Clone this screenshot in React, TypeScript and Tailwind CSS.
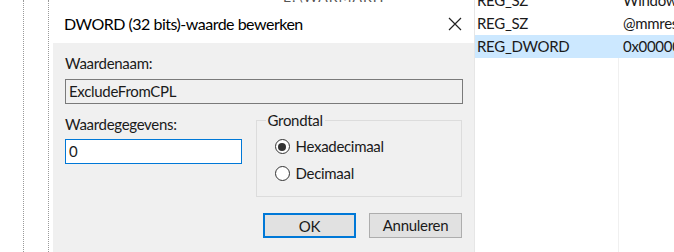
import React from 'react';

const font = { fontFamily: 'Lato, "Noto Sans", sans-serif' };

function Radio({ checked, label }: { checked?: boolean; label: string }) {
    return (
        <div className="flex items-center gap-[6px] h-[27px]">
            <div className="w-[15px] h-[15px] rounded-full border border-[#333333] bg-white flex items-center justify-center">
                {checked && <div className="w-[8px] h-[8px] rounded-full bg-[#333333]" />}
            </div>
            <span className="text-[15px] tracking-[-0.3px] text-[#1a1a1a]">{label}</span>
        </div>
    );
}

export default function App() {
    return (
        <div className="flex w-[674px] h-[252px] overflow-hidden bg-white" style={font}>
            {/* tree pane behind the dialog */}
            <div className="w-[53px] flex flex-shrink-0">
                <div className="w-[23px]" />
                <div className="w-px border-l border-dotted border-[#9a9a9a]" />
                <div className="w-[24px]" />
                <div className="w-px border-l border-dotted border-[#9a9a9a]" />
            </div>

            {/* dialog */}
            <div className="w-[422px] flex-shrink-0 flex flex-col border-r border-[#e6e6e6]">
                <div className="h-[5px] overflow-hidden flex text-[14px] text-[#555] leading-none">
                    <span className="ml-[230px] -mt-[10px] tracking-[1px]">E:\WARMARH</span>
                </div>
                <div className="h-[38px] bg-white flex items-center justify-between pl-[11px] pr-[12px]">
                    <span className="text-[16px] tracking-[-0.5px] text-black -mt-[1px]">DWORD (32 bits)-waarde bewerken</span>
                    <svg width="14" height="14" viewBox="0 0 14 14" className="-mt-[1px]">
                        <path d="M1 1 L13 13 M13 1 L1 13" stroke="#222" strokeWidth="1.2" />
                    </svg>
                </div>
                <div className="flex-1 bg-[#f0f0f0] pl-[12px] pr-[12px] pt-[12px] text-[15px] tracking-[-0.3px] text-[#1a1a1a]">
                    <div className="leading-[17px]">Waardenaam:</div>
                    <div className="mt-[7px] h-[25px] w-[398px] border border-[#7a7a7a] bg-[#f0f0f0] flex items-center px-[3px]">
                        ExcludeFromCPL
                    </div>
                    <div className="flex mt-[9px]">
                        <div className="w-[191px] flex flex-col">
                            <div className="leading-[17px] mt-[3px]">Waardegegevens:</div>
                            <div className="mt-[6px] h-[25px] w-[177px] border border-[#0078d7] bg-white flex items-center px-[3px]">
                                0
                            </div>
                        </div>
                        <fieldset className="w-[207px] h-[85px] border border-[#dcdcdc] -mt-[1px]">
                            <legend className="px-[2px] ml-[9px] leading-[17px]">Grondtal</legend>
                            <div className="flex flex-col mt-[4px] pl-[18px]">
                                <Radio checked label="Hexadecimaal" />
                                <Radio label="Decimaal" />
                            </div>
                        </fieldset>
                    </div>
                    <div className="flex justify-end gap-[13px] mt-[16px]">
                        <button className="w-[93px] h-[25px] border-2 border-[#0078d7] bg-[#e1e1e1] text-[15px]">OK</button>
                        <button className="w-[93px] h-[25px] border border-[#adadad] bg-[#e1e1e1] text-[15px]">Annuleren</button>
                    </div>
                </div>
            </div>

            {/* registry value list */}
            <div className="flex-1 flex flex-col text-[15px] tracking-[-0.3px] text-[#1a1a1a]">
                <div className="h-[12px] overflow-hidden flex">
                    <div className="w-[146px] pl-[2px] -mt-[11px] leading-[23px]">REG_SZ</div>
                    <div className="pl-[2px] -mt-[11px] leading-[23px]">Windows</div>
                </div>
                <div className="h-[23px] flex items-center">
                    <div className="w-[146px] pl-[2px]">REG_SZ</div>
                    <div className="pl-[2px] whitespace-nowrap">@mmres.dll</div>
                </div>
                <div className="h-[23px] flex items-center bg-[#cce8ff]">
                    <div className="w-[146px] pl-[2px]">REG_DWORD</div>
                    <div className="pl-[2px] whitespace-nowrap">0x00000000</div>
                </div>
                <div className="flex-1 flex">
                    <div className="w-[143px]" />
                    <div className="w-px bg-[#f0f0f0]" />
                </div>
            </div>
        </div>
    );
}
